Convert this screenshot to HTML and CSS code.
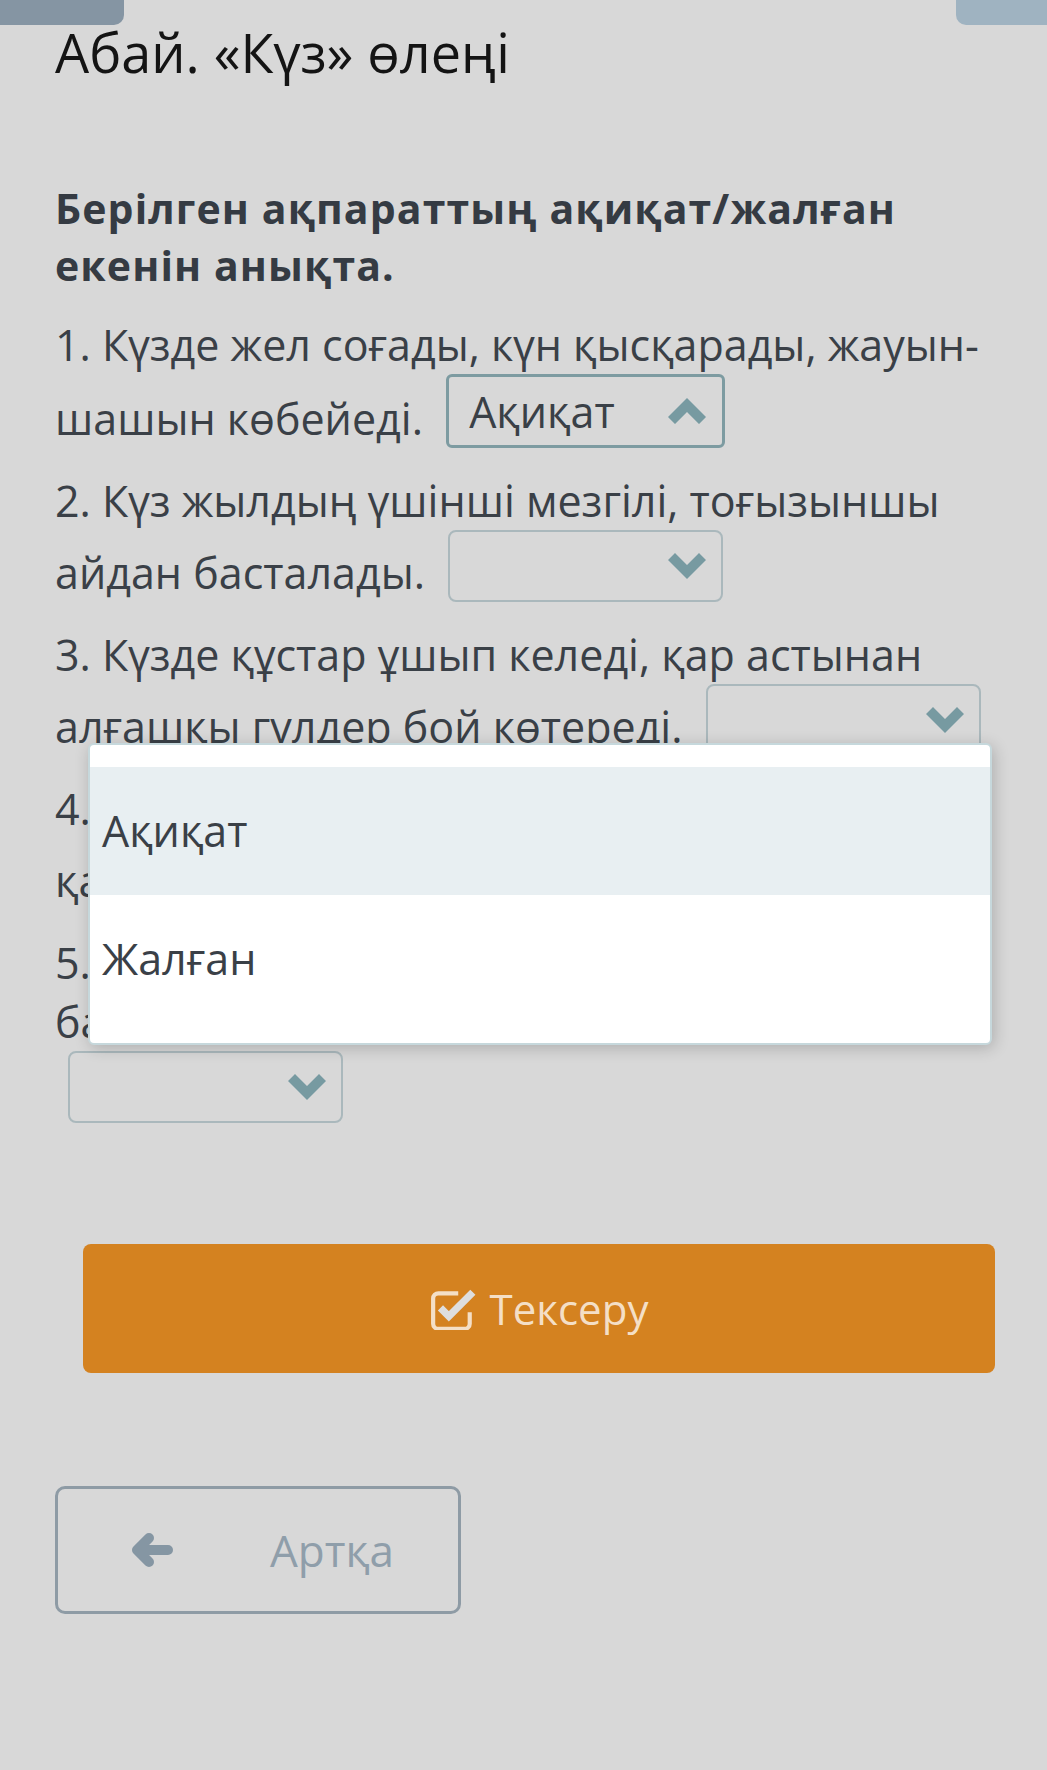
FILE: index.html
```html
<!DOCTYPE html>
<html lang="kk">
<head>
<meta charset="utf-8">
<title>Абай. «Күз» өлеңі</title>
<link rel="stylesheet" href="styles.css">
</head>
<body>
<div class="page">
  <div class="tabs">
    <div class="tab tab-left"></div>
    <div class="tab tab-right"></div>
  </div>
  <main class="content">
    <h1 class="title">Абай. «Күз» өлеңі</h1>
    <h2 class="task">Берілген ақпараттың ақиқат/жалған екенін анықта.</h2>

    <p class="item">1. Күзде жел соғады, күн қысқарады, жауын-<br>шашын көбейеді. <span class="select select-open"><span class="select-value">Ақиқат</span><svg class="chev" viewBox="0 0 38 26"><polygon points="0,19 7,26 19,14 31,26 38,19 19,0"/></svg></span></p>

    <p class="item">2. Күз жылдың үшінші мезгілі, тоғызыншы<br>айдан басталады. <span class="select"><span class="select-value"></span><svg class="chev" viewBox="0 0 38 26"><polygon points="0,7 7,0 19,12 31,0 38,7 19,26"/></svg></span></p>

    <p class="item">3. Күзде құстар ұшып келеді, қар астынан<br>алғашқы гүлдер бой көтереді. <span class="select"><span class="select-value"></span><svg class="chev" viewBox="0 0 38 26"><polygon points="0,7 7,0 19,12 31,0 38,7 19,26"/></svg></span></p>

    <p class="item">4. Күздің соңғы айы – қараша, ол<br>қарашада қыс басталады. <span class="select"><span class="select-value"></span><svg class="chev" viewBox="0 0 38 26"><polygon points="0,7 7,0 19,12 31,0 38,7 19,26"/></svg></span></p>

    <p class="item">5. Күзде аңдар ін қазып, қысқа дайындала<br>бастайтын кез.<br><span class="select select-first"><span class="select-value"></span><svg class="chev" viewBox="0 0 38 26"><polygon points="0,7 7,0 19,12 31,0 38,7 19,26"/></svg></span></p>

    <button class="btn-check" type="button">
      <svg class="check-icon" viewBox="0 0 44 40">
        <path class="check-box" d="M27 5 H8 a5 5 0 0 0 -5 5 v24 a5 5 0 0 0 5 5 h25 a5 5 0 0 0 5 -5 v-11"/>
        <polyline class="check-mark" points="10,19 18,27 41,4"/>
      </svg>
      <span>Тексеру</span>
    </button>

    <button class="btn-back" type="button">
      <svg class="back-icon" viewBox="0 0 44 34">
        <path d="M39 17 H9 M20 5 L8 17 L20 29"/>
      </svg>
      <span>Артқа</span>
    </button>
  </main>

  <ul class="dropdown">
    <li class="option option-active">Ақиқат</li>
    <li class="option">Жалған</li>
  </ul>
</div>
</body>
</html>
```

FILE: styles.css
```css
* { box-sizing: border-box; }

html, body {
  margin: 0;
  padding: 0;
  background: #d8d8d8;
}

body {
  font-family: "Open Sans", "Noto Sans", sans-serif;
  color: #3a4047;
}

.page {
  position: relative;
  min-height: 1770px;
}

.tabs {
  display: flex;
  justify-content: space-between;
  height: 25px;
}

.tab { height: 25px; }

.tab-left {
  width: 124px;
  background: #8595a3;
  border-bottom-right-radius: 10px;
}

.tab-right {
  width: 91px;
  background: #9fb3c1;
  border-bottom-left-radius: 10px;
}

.content {
  padding: 0 55px;
}

.title {
  margin: 3px 0 0;
  font-size: 54px;
  font-weight: 400;
  line-height: 48px;
  color: #141414;
}

.task {
  margin: 104px 0 21px;
  font-size: 41px;
  font-weight: 700;
  letter-spacing: 1.1px;
  line-height: 57px;
  color: #353b43;
}

.item {
  margin: 0 0 23px;
  font-size: 43px;
  line-height: 59px;
  white-space: nowrap;
}

.select {
  display: inline-flex;
  align-items: center;
  justify-content: space-between;
  vertical-align: bottom;
  width: 275px;
  height: 72px;
  margin-left: 12px;
  padding: 0 15px 0 22px;
  border: 2px solid #aab8bc;
  border-radius: 8px;
}

.select-first { margin-left: 13px; }

.select-open {
  width: 279px;
  height: 74px;
  border: 3px solid #7d9ba1;
  border-radius: 6px;
  padding-left: 20px;
  padding-right: 16px;
}

.select-value {
  font-size: 43px;
  line-height: 1;
  color: #3a4047;
}

.chev {
  width: 38px;
  height: 26px;
  fill: #779aa1;
  flex: none;
}

.btn-check {
  display: flex;
  align-items: center;
  justify-content: center;
  gap: 14px;
  width: 912px;
  height: 129px;
  margin: 121px 0 0 28px;
  padding: 0;
  border: 0;
  border-radius: 8px;
  background: #d48220;
  font-family: "Open Sans", "Noto Sans", sans-serif;
  font-size: 42px;
  color: #f4dfc6;
}

.check-icon {
  width: 46px;
  height: 42px;
}

.check-box {
  fill: none;
  stroke: #f4dfc6;
  stroke-width: 4;
}

.check-mark {
  fill: none;
  stroke: #dedede;
  stroke-width: 7;
  stroke-linejoin: miter;
}

.btn-back {
  display: flex;
  align-items: center;
  width: 406px;
  height: 128px;
  margin-top: 113px;
  padding: 0 0 0 71px;
  border: 3px solid #8e9ba5;
  border-radius: 10px;
  background: transparent;
  font-family: "Open Sans", "Noto Sans", sans-serif;
  font-size: 44px;
  color: #8f9eaa;
}

.back-icon {
  width: 44px;
  height: 34px;
  margin-right: 97px;
}

.back-icon path {
  fill: none;
  stroke: #8596a3;
  stroke-width: 10;
  stroke-linecap: round;
  stroke-linejoin: round;
}

.dropdown {
  position: absolute;
  left: 88px;
  top: 743px;
  width: 904px;
  height: 302px;
  margin: 0;
  padding: 22px 0 0;
  list-style: none;
  background: #fff;
  border: 2px solid #c6d8dc;
  border-radius: 6px;
  box-shadow: 2px 3px 16px rgba(0, 0, 0, 0.2);
}

.option {
  height: 128px;
  padding: 0 0 0 12px;
  font-size: 43px;
  line-height: 128px;
  color: #3a4047;
}

.option-active {
  background: #e8eff2;
}
```
